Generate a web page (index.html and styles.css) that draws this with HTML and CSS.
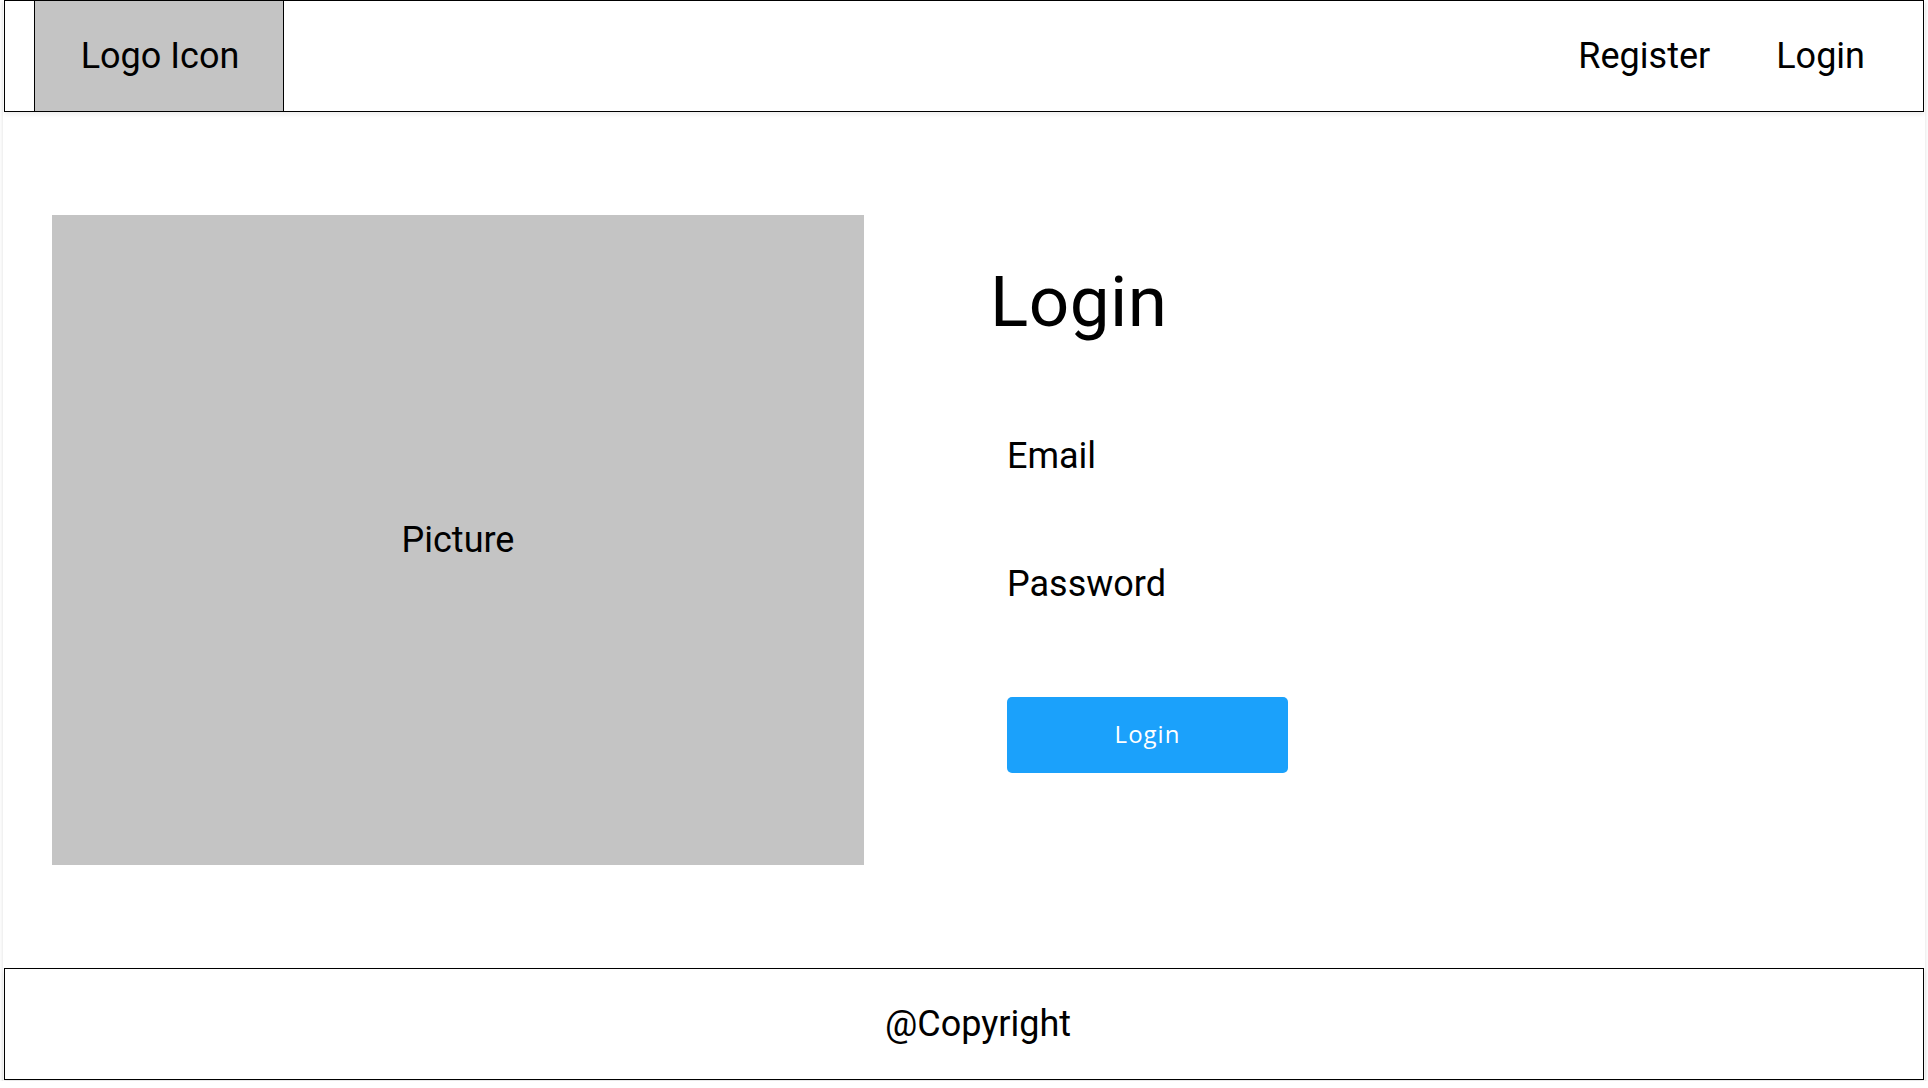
FILE: index.html
```html
<!DOCTYPE html>
<html lang="en">
<head>
<meta charset="utf-8">
<title>Login</title>
<link rel="stylesheet" href="styles.css">
</head>
<body>
<div class="page">
  <header class="header">
    <div class="logo">Logo Icon</div>
    <nav class="nav">
      <a class="nav-link" href="#">Register</a>
      <a class="nav-link" href="#">Login</a>
    </nav>
  </header>
  <main class="main">
    <div class="picture">Picture</div>
    <section class="login">
      <h1 class="login-title">Login</h1>
      <div class="login-form">
        <div class="field field-email">Email</div>
        <div class="field field-password">Password</div>
        <button class="btn" type="button">Login</button>
      </div>
    </section>
  </main>
  <footer class="footer">@Copyright</footer>
</div>
</body>
</html>
```

FILE: styles.css
```css
* { box-sizing: border-box; }

html, body {
  margin: 0;
  padding: 0;
  background: #ffffff;
}

body {
  font-family: Roboto, "Liberation Sans", Arial, sans-serif;
  color: #000;
}

.page {
  margin-left: 3px;
  width: 1922px;
  height: 1081px;
  background: #fff;
  box-shadow: 0 2px 4px rgba(0, 0, 0, 0.14);
  display: flex;
  flex-direction: column;
}

.header {
  flex-shrink: 0;
  margin: 0 1px;
  height: 112px;
  border: 1px solid #000;
  display: flex;
  align-items: stretch;
  justify-content: space-between;
  box-shadow: 0 3px 4px rgba(0, 0, 0, 0.06);
  position: relative;
  z-index: 1;
  background: #fff;
}

.logo {
  margin-left: 29px;
  width: 250px;
  background: #c4c4c4;
  border-left: 1px solid #000;
  border-right: 1px solid #000;
  display: flex;
  align-items: center;
  justify-content: center;
  font-size: 36px;
  padding-left: 2px;
}

.nav {
  display: flex;
  align-items: center;
  gap: 66px;
  padding-right: 58px;
}

.nav-link {
  font-size: 36px;
  color: #000;
  text-decoration: none;
}

.main {
  flex-shrink: 0;
  height: 856px;
  display: flex;
  align-items: flex-start;
  padding: 103px 0 0 49px;
}

.picture {
  width: 812px;
  height: 650px;
  background: #c4c4c4;
  display: flex;
  align-items: center;
  justify-content: center;
  font-size: 36px;
}

.login {
  margin-left: 126px;
  padding-top: 51px;
}

.login-title {
  margin: 0;
  font-size: 71px;
  font-weight: 400;
  line-height: 72px;
  letter-spacing: 0.5px;
}

.login-form {
  margin-left: 17px;
  display: flex;
  flex-direction: column;
  align-items: flex-start;
}

.field {
  font-size: 36px;
  line-height: 42px;
}

.field-email { margin-top: 97px; }
.field-password { margin-top: 86px; }

.btn {
  margin-top: 92px;
  width: 281px;
  height: 76px;
  border: none;
  border-radius: 5px;
  background: #1ba1fb;
  color: #fff;
  font-family: "Open Sans", Lato, sans-serif;
  font-size: 24px;
  letter-spacing: 1px;
  padding: 0 0 4px;
}

.footer {
  flex-shrink: 0;
  margin: 0 1px;
  height: 112px;
  border: 1px solid #000;
  display: flex;
  align-items: center;
  justify-content: center;
  padding-left: 28px;
  font-size: 36px;
  box-shadow: 0 3px 4px rgba(0, 0, 0, 0.1);
}
```
